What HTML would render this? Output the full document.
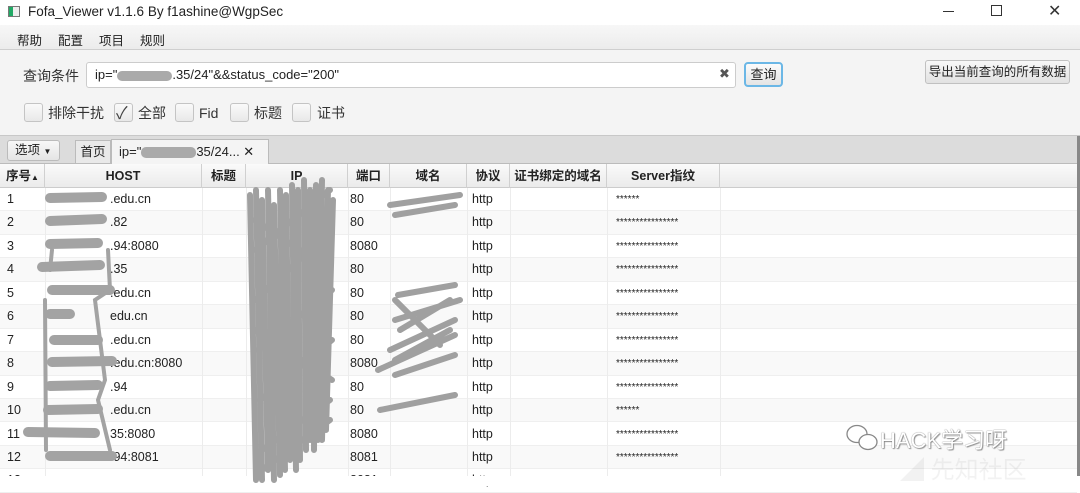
<!DOCTYPE html>
<html><head><meta charset="utf-8"><style>
*{margin:0;padding:0;box-sizing:border-box}
body{width:1080px;height:486px;overflow:hidden;background:#fff;font-family:"Liberation Sans","Noto Sans CJK SC",sans-serif;font-size:13px;color:#222;position:relative}
.abs{position:absolute}
.title{top:0;left:0;width:1080px;height:25px;background:#fff}
.menu{top:25px;left:0;width:1080px;height:25px;background:linear-gradient(#f7f7f7,#ececec);border-bottom:1px solid #cfcfcf}
.menu span{position:absolute;top:5px;font-size:12.5px}
.tool{top:50px;left:0;width:1080px;height:86px;background:#f4f4f4;border-bottom:1px solid #c8c8c8}
.cb{position:absolute;top:103px;width:19px;height:19px;border:1px solid #c4c4c4;border-radius:3px;background:linear-gradient(#fafafa,#e8e8e8)}
.lbl{position:absolute;top:103px;font-size:14px;color:#333;line-height:20px}
.tabbar{top:136px;left:0;width:1080px;height:28px;background:#dcdcdc;border-bottom:1px solid #bbb}
.hdr{top:164px;left:0;width:1080px;height:24px;background:linear-gradient(#fafafa,#ebebeb);border-bottom:1px solid #ccc}
.hdr div{position:absolute;top:0;height:24px;border-right:1px solid #d0d0d0;font-weight:bold;font-size:12.5px;text-align:center;line-height:24px}
.row{position:absolute;left:0;width:1077px;height:23.45px;font-size:12.5px;line-height:23px}
.row span{position:absolute}
.vl{position:absolute;top:188px;width:1px;height:288px;background:#ececec}
</style></head><body>
<div class="abs title">
 <div class="abs" style="left:8px;top:6px;width:12px;height:11px;border:1px solid #777;background:linear-gradient(90deg,#2a6 40%,#eee 40%)"></div>
 <div class="abs" style="left:28px;top:4px;font-size:13.5px">Fofa_Viewer v1.1.6 By f1ashine@WgpSec</div>
 <div class="abs" style="left:943px;top:11px;width:11px;height:1px;background:#333"></div>
 <div class="abs" style="left:991px;top:5px;width:11px;height:11px;border:1px solid #333"></div>
 <div class="abs" style="left:1048px;top:1px;font-size:16px;color:#333">✕</div>
</div>
<div class="abs menu"><span style="left:17px">帮助</span><span style="left:58px">配置</span><span style="left:99px">项目</span><span style="left:140px">规则</span></div>
<div class="abs tool">
 <div class="abs" style="left:23px;top:16px;font-size:14px;color:#333">查询条件</div>
 <div class="abs" style="left:86px;top:12px;width:650px;height:26px;background:#fff;border:1px solid #ccc;border-radius:3px"></div>
 <div class="abs" style="left:95px;top:17px;font-size:13px">ip="<span style="display:inline-block;width:55px;height:10px;background:#aaa;border-radius:5px;vertical-align:middle"></span>.35/24"&amp;&amp;status_code="200"</div>
 <div class="abs" style="left:719px;top:16px;font-size:13px;color:#555">✖</div>
 <div class="abs" style="left:744px;top:12px;width:39px;height:25px;border:2px solid #6bb7e6;border-radius:4px;background:linear-gradient(#fbfbfb,#e4e4e4);text-align:center;line-height:21px;font-size:13px">查询</div>
 <div class="abs" style="left:925px;top:10px;width:145px;height:24px;border:1px solid #c0c0c0;border-radius:3px;background:linear-gradient(#f8f8f8,#e2e2e2);text-align:center;line-height:22px;font-size:12.5px">导出当前查询的所有数据</div>
</div>
<div class="cb" style="left:24px"></div><div class="lbl" style="left:48px">排除干扰</div>
<div class="cb" style="left:114px"></div><div class="abs" style="left:116px;top:99px;font-size:17px;color:#444">✓</div><div class="lbl" style="left:138px">全部</div>
<div class="cb" style="left:175px"></div><div class="lbl" style="left:199px">Fid</div>
<div class="cb" style="left:230px"></div><div class="lbl" style="left:254px">标题</div>
<div class="cb" style="left:292px"></div><div class="lbl" style="left:317px">证书</div>
<div class="abs tabbar">
 <div class="abs" style="left:7px;top:4px;width:53px;height:21px;border:1px solid #bbb;border-radius:3px;background:linear-gradient(#f8f8f8,#e5e5e5);font-size:12.5px;line-height:19px;padding-left:7px">选项 <span style="font-size:8px">▼</span></div>
 <div class="abs" style="left:75px;top:4px;width:36px;height:24px;border:1px solid #bbb;background:#e9e9e9;font-size:12.5px;line-height:22px;text-align:center">首页</div>
 <div class="abs" style="left:111px;top:3px;width:158px;height:26px;border:1px solid #bbb;border-bottom:none;background:#f4f4f4;font-size:13px;line-height:24px;padding-left:7px">ip="<span style="display:inline-block;width:55px;height:11px;background:#aaa;border-radius:5px;vertical-align:middle"></span>35/24... ✕</div>
</div>
<div class="abs hdr">
 <div style="left:0;width:45px;text-align:left;padding-left:6px">序号<span style="font-size:8px">▲</span></div>
 <div style="left:45px;width:157px">HOST</div>
 <div style="left:202px;width:44px">标题</div>
 <div style="left:246px;width:102px">IP</div>
 <div style="left:348px;width:42px">端口</div>
 <div style="left:390px;width:77px">域名</div>
 <div style="left:467px;width:43px">协议</div>
 <div style="left:510px;width:97px">证书绑定的域名</div>
 <div style="left:607px;width:113px">Server指纹</div>
</div>
<div id="rows"></div>
<div class="vl" style="left:45px"></div><div class="vl" style="left:202px"></div><div class="vl" style="left:246px"></div><div class="vl" style="left:348px"></div><div class="vl" style="left:390px"></div><div class="vl" style="left:467px"></div><div class="vl" style="left:510px"></div><div class="vl" style="left:607px"></div><div class="vl" style="left:720px"></div>
<div class="abs" style="left:1077px;top:136px;width:3px;height:340px;background:#888"></div>
<div class="abs" style="left:0;top:476px;width:1080px;height:10px;background:#fff"></div>
<script>
var d=[["1",".edu.cn","80","******"],["2",".82","80","****************"],["3",".94:8080","8080","****************"],["4",".35","80","****************"],["5",".edu.cn","80","****************"],["6","edu.cn","80","****************"],["7",".edu.cn","80","****************"],["8",".edu.cn:8080","8080","****************"],["9",".94","80","****************"],["10",".edu.cn","80","******"],["11","35:8080","8080","****************"],["12",".94:8081","8081","****************"],["13","","8081","****************"]];
var h="";d.forEach(function(r,i){var y=188+i*23.45;h+='<div class="row" style="top:'+y+'px;background:'+(i%2?'#f9f9f9':'#fff')+';border-bottom:1px solid #efefef"><span style="left:7px">'+r[0]+'</span><span style="left:110px">'+r[1]+'</span><span style="left:350px">'+r[2]+'</span><span style="left:472px">http</span><span style="left:616px;font-size:10px">'+r[3]+'</span></div>';});
document.getElementById("rows").innerHTML=h;
</script>
<svg class="abs" style="left:0;top:0" width="1080" height="486">
<g fill="none" stroke="#a3a3a3" stroke-linecap="round" stroke-width="10">
<path d="M50 198 L102 197 M50 221 L102 219 M50 244 L98 243 M42 267 L100 265 M52 290 L110 290 M50 314 L70 314 M54 340 L98 340 M52 362 L112 361 M50 386 L98 385 M48 410 L98 409 M28 432 L95 433 M50 456 L112 456"/>
</g>
<g fill="none" stroke="#a3a3a3" stroke-linecap="round" stroke-width="4">
<path d="M52 250 L50 270 M45 300 L46 450 M108 250 L110 290 L95 300 L105 380 L98 400 L110 450"/>
</g>
<g fill="none" stroke="#a0a0a0" stroke-linecap="round" stroke-width="6">
<path d="M250 195 L256 480 M256 190 L262 480 M262 200 L268 470 M268 190 L274 480 M274 205 L280 475 M280 190 L285 470 M286 195 L290 460 M292 185 L296 470 M298 190 L300 460 M304 180 L306 450 M310 190 L310 440 M316 185 L314 450 M322 180 L318 440 M328 190 L322 440 M333 200 L326 430 M255 250 L330 190 M255 300 L332 230 M258 350 L332 290 M260 400 L332 340 M262 450 L330 400 M262 470 L330 420 M255 220 L330 270 M255 330 L332 380"/>
<path d="M390 205 L460 195 M395 215 L455 205 M398 295 L455 285 M395 320 L460 300 M390 350 L455 320 M378 370 L455 335 M395 375 L455 355 M380 410 L455 395 M395 300 L440 345 M400 330 L450 300 M395 360 L450 330"/>
</g>
<g fill="#fff" stroke="#888" stroke-width="1.3">
<ellipse cx="857" cy="434" rx="10" ry="8.5"/><ellipse cx="868" cy="442" rx="9" ry="7.5"/>
</g>
</svg>
<div class="abs" style="left:880px;top:423px;font-size:22px;color:#fff;text-shadow:0 0 1px #555,1px 1px 1px #999">HACK学习呀</div>
<div class="abs" style="left:900px;top:450px;font-size:24px;color:rgba(0,0,0,.05)">◢ 先知社区</div>
</body></html>
